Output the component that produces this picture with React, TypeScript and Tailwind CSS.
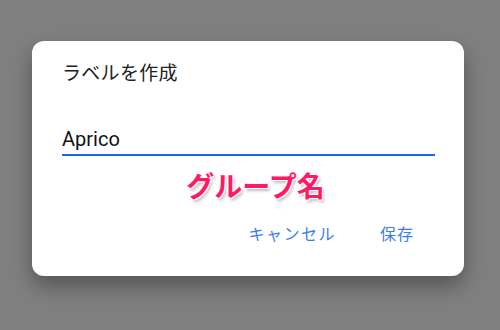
import React from "react";

export default function App() {
  return (
    <div
      className="w-[500px] h-[330px] bg-[#808080] pt-[41px] pl-[32px]"
      style={{ fontFamily: '"Noto Sans CJK JP", Roboto, sans-serif' }}
    >
      <div className="w-[432px] h-[235px] bg-white rounded-[12px] shadow-[0_10px_22px_rgba(0,0,0,0.35)] flex flex-col pl-[30px] pr-[29px]">
        <div className="mt-[17px] text-[19px] leading-[28px] text-[#222] tracking-[0.3px]">ラベルを作成</div>
        <div className="mt-[36px] border-b-2 border-[#1f63f2] pb-[1px] h-[34px] flex items-end">
          <span className="text-[20px] leading-[28px] text-[#111]" style={{ fontFamily: 'Roboto, "Noto Sans CJK JP", sans-serif' }}>Aprico</span>
        </div>
        <div className="mt-[11px] flex justify-center pl-[14px]">
          <span
            className="text-[28px] leading-[36px] font-bold text-[#ff1a66]"
            style={{ textShadow: "0 0 2px #fff, 1px 1px 0 #fff, -1px -1px 0 #fff, 1px -1px 0 #fff, -1px 1px 0 #fff, 2px 3px 3px rgba(0,0,0,0.25)" }}
          >
            グループ名
          </span>
        </div>
        <div className="mt-[18px] flex justify-end gap-[44px] pr-[21px] text-[16px] leading-[24px] text-[#3b7de8]">
          <span className="tracking-[1.5px]">キャンセル</span>
          <span className="tracking-[1px]">保存</span>
        </div>
      </div>
    </div>
  );
}
